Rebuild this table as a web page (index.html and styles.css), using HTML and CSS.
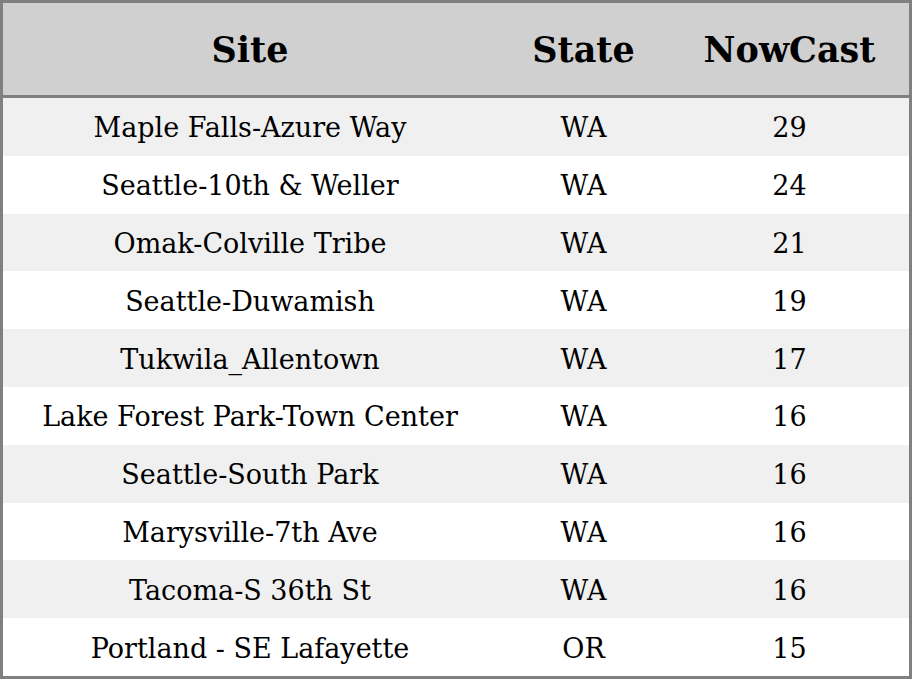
FILE: index.html
```html
<!DOCTYPE html>
<html>
<head>
<meta charset="utf-8">
<link rel="stylesheet" href="styles.css">
</head>
<body>
<table class="aq">
  <colgroup>
    <col class="c-site">
    <col class="c-state">
    <col class="c-now">
  </colgroup>
  <thead>
    <tr><th>Site</th><th>State</th><th>NowCast</th></tr>
  </thead>
  <tbody>
    <tr><td>Maple Falls-Azure Way</td><td>WA</td><td>29</td></tr>
    <tr><td>Seattle-10th &amp; Weller</td><td>WA</td><td>24</td></tr>
    <tr><td>Omak-Colville Tribe</td><td>WA</td><td>21</td></tr>
    <tr><td>Seattle-Duwamish</td><td>WA</td><td>19</td></tr>
    <tr><td>Tukwila_Allentown</td><td>WA</td><td>17</td></tr>
    <tr><td>Lake Forest Park-Town Center</td><td>WA</td><td>16</td></tr>
    <tr><td>Seattle-South Park</td><td>WA</td><td>16</td></tr>
    <tr><td>Marysville-7th Ave</td><td>WA</td><td>16</td></tr>
    <tr><td>Tacoma-S 36th St</td><td>WA</td><td>16</td></tr>
    <tr><td>Portland - SE Lafayette</td><td>OR</td><td>15</td></tr>
  </tbody>
</table>
</body>
</html>
```

FILE: styles.css
```css
html, body {
  margin: 0;
  padding: 0;
  background: #ffffff;
}
.aq {
  border-collapse: separate;
  border-spacing: 0;
  border: 3px solid #808080;
  width: 912px;
  table-layout: fixed;
  font-family: "DejaVu Serif", serif;
  color: #000000;
}
.c-site { width: 494px; }
.c-state { width: 173px; }
.c-now { width: 239px; }
.aq th {
  background: #d0d0d0;
  font-size: 35px;
  font-weight: bold;
  height: 92px;
  padding: 0;
  text-align: center;
  vertical-align: middle;
  border-bottom: 3px solid #808080;
}
.aq td {
  font-size: 27px;
  height: 57.8px;
  padding: 2px 0 0 0;
  box-sizing: border-box;
  text-align: center;
  vertical-align: middle;
}
.aq tbody tr:nth-child(odd) td {
  background: #f0f0f0;
}
```
